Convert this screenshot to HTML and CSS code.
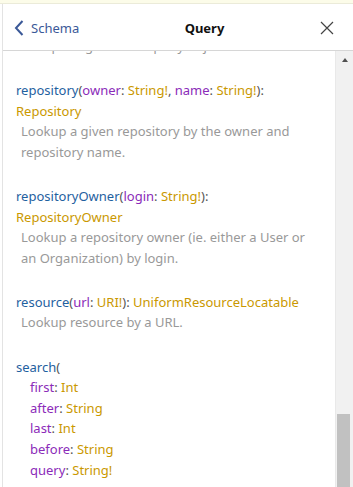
FILE: index.html
```html
<!DOCTYPE html>
<html lang="en">
<head>
    <meta charset="UTF-8">
    <title>Query</title>
    <link rel="stylesheet" href="styles.css">
</head>
<body>
    <div class="topbar"></div>
    <div class="doc-explorer">
        <div class="title-bar">
            <div class="back-link">
                <svg class="chevron" width="10" height="16" viewBox="0 0 10 16">
                    <polyline points="8.5,1 2,8 8.5,15" fill="none" stroke="#3b5998" stroke-width="2"/>
                </svg>
                Schema
            </div>
            <div class="title">Query</div>
            <div class="close">
                <svg width="14" height="14" viewBox="0 0 14 14">
                    <path d="M1 1 L13 13 M13 1 L1 13" stroke="#444" stroke-width="1.2"/>
                </svg>
            </div>
        </div>

        <div class="doc-body">
            <div class="contents">
                <div class="list">
                    <!-- previous item, scrolled away -->
                    <div class="item">
                        <div class="desc">re-exposing the root query object.</div>
                    </div>

                    <div class="item">
                        <div class="sig"><span class="field">repository</span>(<span class="arg">owner</span>: <span class="type">String!</span>, <span class="arg">name</span>: <span class="type">String!</span>): <span class="type">Repository</span></div>
                        <div class="desc">Lookup a given repository by the owner and repository name.</div>
                    </div>

                    <div class="item">
                        <div class="sig"><span class="field">repositoryOwner</span>(<span class="arg">login</span>: <span class="type">String!</span>): <span class="type">RepositoryOwner</span></div>
                        <div class="desc">Lookup a repository owner (ie. either a User or an Organization) by login.</div>
                    </div>

                    <div class="item">
                        <div class="sig"><span class="field">resource</span>(<span class="arg">url</span>: <span class="type">URI!</span>): <span class="type">UniformResourceLocatable</span></div>
                        <div class="desc">Lookup resource by a URL.</div>
                    </div>

                    <div class="item">
                        <div class="sig">
                            <span class="field">search</span>(
                            <div class="arg-line"><span class="arg">first</span>: <span class="type">Int</span></div>
                            <div class="arg-line"><span class="arg">after</span>: <span class="type">String</span></div>
                            <div class="arg-line"><span class="arg">last</span>: <span class="type">Int</span></div>
                            <div class="arg-line"><span class="arg">before</span>: <span class="type">String</span></div>
                            <div class="arg-line"><span class="arg">query</span>: <span class="type">String!</span></div>
                        </div>
                    </div>
                </div>
            </div>

            <!-- scrollbar -->
            <div class="scrollbar">
                <div class="scroll-arrow"></div>
                <div class="scroll-track"></div>
                <div class="scroll-thumb"></div>
            </div>
        </div>
    </div>
</body>
</html>
```
FILE: styles.css
```css
html, body {
    height: 100%;
}

body {
    margin: 0;
    background: #fff;
    font-family: 'Noto Sans', sans-serif;
    color: #555;
    display: flex;
    flex-direction: column;
    overflow: hidden;
}

.topbar {
    height: 3px;
    background: #fcfce9;
    border-bottom: 1px solid #ebebd9;
    flex: none;
}

.doc-explorer {
    flex: 1;
    min-height: 0;
    display: flex;
    flex-direction: column;
    margin-left: 2px;
    border-left: 1px solid #e3e3e3;
}

/* Title bar */
.title-bar {
    height: 47px;
    display: flex;
    align-items: center;
    border-bottom: 1px solid #d6d6d6;
    flex: none;
    font-size: 13px;
    padding-top: 1px;
    box-sizing: border-box;
}

.back-link {
    display: flex;
    align-items: center;
    color: #3b5998;
    padding-left: 11px;
    width: 90px;
}

.chevron {
    margin-right: 7px;
}

.title {
    flex: 1;
    text-align: center;
    font-weight: bold;
    color: #111;
    padding-left: 8px;
}

.close {
    width: 56px;
    display: flex;
    align-items: center;
    padding-left: 23px;
    box-sizing: border-box;
}

.close svg {
    display: block;
}

/* Contents */
.doc-body {
    flex: 1;
    min-height: 0;
    display: flex;
}

.contents {
    flex: 1;
    overflow: hidden;
    padding: 0 27px 0 13px;
    font-size: 13px;
    line-height: 20.6px;
}

.list {
    margin-top: -15px;
}

.item {
    margin-bottom: 23.5px;
}

.field {
    color: #1f61a0;
}

.arg {
    color: #8b2bb9;
}

.type {
    color: #ca9800;
}

.desc {
    color: #999;
    padding-left: 5px;
}

.arg-line {
    margin-left: 14px;
}

/* Fake scrollbar */
.scrollbar {
    width: 17px;
    flex: none;
    background: #f1f1f1;
    border-left: 1px solid #e9e9e9;
    display: flex;
    flex-direction: column;
    align-items: center;
}

.scroll-arrow {
    margin-top: 7px;
    width: 0;
    height: 0;
    border-left: 3px solid transparent;
    border-right: 3px solid transparent;
    border-bottom: 4px solid #505050;
}

.scroll-track {
    flex: 1;
}

.scroll-thumb {
    width: 13px;
    height: 73px;
    background: #c1c1c1;
    margin-right: 2px;
}
```
